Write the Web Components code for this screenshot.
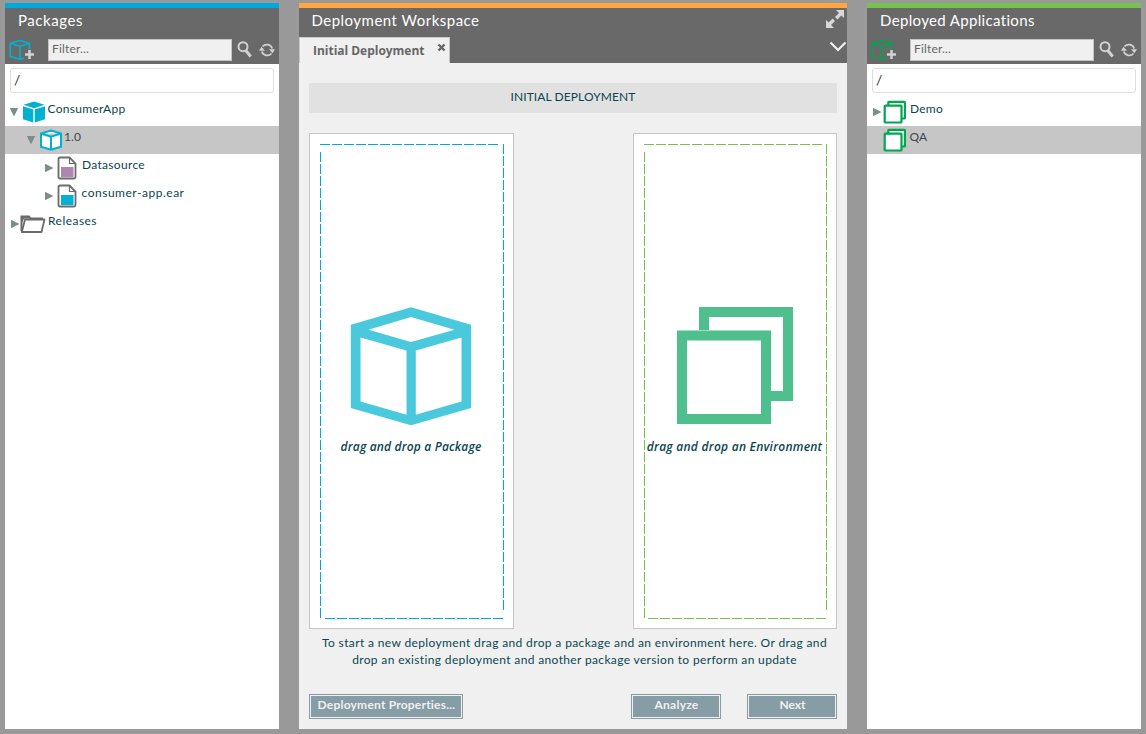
<!DOCTYPE html>
<html lang="en"><head><meta charset="utf-8"><title>Deployment</title>
<style>
html,body{margin:0;height:100%;background:#999}
</style></head><body>
<deploy-app></deploy-app>
<script>
const define=(name,html,setup)=>{
  const t=document.createElement('template');t.innerHTML=html;
  customElements.define(name,class extends HTMLElement{
    connectedCallback(){
      if(this.shadowRoot)return;
      this.attachShadow({mode:'open'}).append(t.content.cloneNode(true));
      if(setup)setup(this,this.shadowRoot);
    }
  });
};

/* Label that spaces its letters to span the width given in "w". */
define('ui-label',`<style>:host{display:inline-block;white-space:pre}span{display:inline-block}</style><span></span>`,(el,r)=>{
  const s=r.querySelector('span'),text=el.getAttribute('text'),w=+el.getAttribute('w');
  s.textContent=text;
  const natural=s.getBoundingClientRect().width;
  if(w&&natural){s.style.letterSpacing=((w-natural)/text.length).toFixed(3)+'px';}
});

const ICONS={
  expand:['0 0 20 20','<path fill="#d8d8d8" d="M11 1h8v8l-2.600-2.600-4 4-2.400-2.400 4-4zM9 19H1v-8l2.600 2.600 4-4 2.400 2.400-4 4z"/><path d="M5.500 5.500l9 9" stroke="#696969" stroke-width="1.400"/>'],
  chevron:['0 0 18 12','<path d="M1.500 1.500L9 9l7.500-7.500" fill="none" stroke="#f0f0f0" stroke-width="2.200"/>'],
  search:['0 0 16 17','<g fill="none" stroke="#d2d2d2"><circle cx="6" cy="5.700" r="4.500" stroke-width="2"/><path d="M8.800 9.500l4.900 6" stroke-width="3"/></g>'],
  refresh:['0 0 16 14','<g fill="none" stroke="#d2d2d2" stroke-width="1.700"><path d="M3.500 3.500A5.700 5.700 0 0 1 13.200 5.500M12.500 10.500A5.700 5.700 0 0 1 2.800 8.500"/></g><path d="M0 7.800L2.500 3.800 6 7.800zM10 6.200h6L13.500 10.200z" fill="#d2d2d2"/>'],
  add:['0 0 26 22','<g fill="none" stroke="currentColor" stroke-width="1.600" stroke-linejoin="round"><path d="M1.200 4.200L11 1.500l9.500 2.700v10M1.200 4.200v13.300L11 20.200l4-1M1.200 4.200L11 7.200l9.500-3M11 7.200v13"/></g><path d="M20.500 10.500v10M15.500 15.500h10" stroke="#696969" stroke-width="5"/><path d="M20.500 11v9M16 15.500h9" stroke="#d2d2d2" stroke-width="2.500"/>'],
  boxfill:['0 0 24 22','<path d="M1.500 3.800L12 .5l10.500 3.300L12 7.200zM1 5.200l10.300 3.200v13L1 18.300zM23 5.200L12.700 8.400v13L23 18.300z" fill="#00b2d0"/>'],
  box:['0 0 24 22','<path d="M2 4.500L12 1.500l10 3v13.200L12 20.700 2 17.700zM2 4.500l10 3.200 10-3.200M12 7.700v13" fill="#fff" stroke="#00b2d0" stroke-width="2"/>'],
  folder:['0 0 26 20','<path d="M1.500 17V2.500h7.500l1.500 2h11.500v2" fill="none" stroke="#6b6b6b" stroke-width="2"/><path d="M1.500 2h7.500l1.500 2.500H4L1.500 10z" fill="#6b6b6b"/><path d="M5 5.500h19.500L21.500 18H1.800z" fill="#fff" stroke="#6b6b6b" stroke-width="1.800" stroke-linejoin="round"/>'],
  envs:['0 0 24 24','<g fill="#fff" stroke="#00a651" stroke-width="2.200"><rect x="5.300" y="1.900" width="16.600" height="16.600" rx=".6"/><rect x="1.700" y="5.700" width="16.800" height="16.800" rx=".6"/></g>'],
  bigbox:['0 0 122 120','<path fill="#4bc9dc" fill-rule="evenodd" d="M.8 17.800L61 .3l60 17.500V101L61 118.300.8 101zM18.500 22.700L61 10 104.500 22.700 61 35zM10.500 30.500v64L56.500 107.700V43.500zM111.500 30.500v64L65.800 107.700V43.500z"/>'],
  bigenv:['0 0 118 118','<g fill="none" stroke="#50bf8e" stroke-width="10"><path d="M27 23V5h84v84H94"/><rect x="5" y="28.500" width="84" height="83.500"/></g>']
};
const doc=c=>['0 0 20 24',`<path d="M3 1.500h9.500l6 6V21q0 1.500-1.500 1.500H3Q1.500 22.500 1.500 21V3Q1.500 1.500 3 1.500z" fill="#fff" stroke="#6b6b6b" stroke-width="1.800"/><path d="M12.500 2v5.500H18" fill="none" stroke="#6b6b6b" stroke-width="1.200"/><path d="M4 11h12.500v10H4z" fill="${c}"/>`];
ICONS.docpurple=doc('#ae87b0');ICONS.doccyan=doc('#00b2d0');
define('ui-icon',`<style>:host{display:block;flex:none}svg{display:block;width:100%;height:100%}</style>`,(el,r)=>{
  const i=ICONS[el.getAttribute('name')];
  r.innerHTML+=`<svg viewBox="${i[0]}">${i[1]}</svg>`;
});

/* Tree rows are built from their attributes. */
define('tree-item',`<style>
:host{display:block;height:28px;font:12px/17px Lato,sans-serif;color:#0b4650}
:host([selected]){background:#c6c6c6;color:#3c4650}
.r{display:flex;height:28px;align-items:flex-start}
.a{width:12px;flex:none;height:12px;padding-top:9px}
svg{display:block}
ui-label{margin-top:2px}
</style><div class="r"></div>`,(el,r)=>{
  const g=n=>el.getAttribute(n);
  const tri={open:'<svg width="10" height="10"><path d="M.8 1h8.400L5 9.500z" fill="#7f8c8d"/></svg>',closed:'<svg width="10" height="10"><path d="M1 .8L9.500 5 1 9.200z" fill="#7f8c8d"/></svg>'}[g('state')]||'';
  const [w,h,mt]=g('size').split(' ');
  r.querySelector('.r').innerHTML=`<div class="a" style="margin-left:${g('indent')}px">${tri}</div><ui-icon name="${g('icon')}" style="width:${w}px;height:${h}px;margin:${mt}px ${g('gap')}px 0 ${g('lead')||0}px"></ui-icon><ui-label text="${g('text')}" w="${g('w')}"></ui-label>`;
});

define('side-panel',`<style>
:host{display:flex;flex-direction:column;width:274px;background:#fff;flex:none;font-family:Lato,sans-serif}
.strip{height:5px;background:var(--accent);flex:none}
header{height:56px;background:#696969;color:#fff;flex:none}
.t{height:28px;padding-left:13px;font-size:15px;line-height:24px}
.bar{display:flex;align-items:flex-start}
.add{width:26px;height:22px;margin:3px 0 0 4px;color:var(--ico)}
.f{box-sizing:border-box;width:184px;height:22px;margin:3px 0 0 13px;border:1px solid #c4c4c4;background:#f0f0f0;color:#666;font-size:12px;line-height:18px;padding-left:3px}
.s{width:16px;height:17px;margin:5px 0 0 5px}
.rf{width:16px;height:14px;margin:7px 0 0 5.500px}
.p{box-sizing:border-box;width:264px;height:25px;border:1px solid #dedede;border-radius:3px;margin:4px 5px 5px;padding-left:3px;font-size:14px;line-height:22px;color:#333;flex:none}
</style><div class="strip"></div><header><div class="t"></div><div class="bar"><ui-icon class="add" name="add"></ui-icon><div class="f"><ui-label text="Filter..." w="37"></ui-label></div><ui-icon class="s" name="search"></ui-icon><ui-icon class="rf" name="refresh"></ui-icon></div></header><div class="p">/</div><slot></slot>`,(el,r)=>{
  r.querySelector('.t').innerHTML=`<ui-label text="${el.getAttribute('heading')}" w="${el.getAttribute('w')}"></ui-label>`;
});

define('drop-card',`<style>
:host{display:grid;box-sizing:border-box;border:1px solid #c6c6c6;background:#fff;height:496px}
.d{grid-area:1/1;margin:10px}
.c{grid-area:1/1;display:flex;flex-direction:column;align-items:center;padding-right:2px;font:italic 600 12px/17px "Open Sans",sans-serif;color:#0b4650;white-space:nowrap}
</style><svg class="d" height="475"></svg><div class="c"><slot></slot></div>`,(el,r)=>{
  const w=+el.getAttribute('inner'),s=r.querySelector('svg');
  s.setAttribute('width',w);
  s.innerHTML=`<g stroke="${el.getAttribute('color')}" stroke-dasharray="10 2"><path d="M0 .5H178M${w-.5} 0V466M${w-1} 474.500H${w-179}M.5 474V8"/></g>`;
});

define('ui-button',`<style>
:host{display:block;box-sizing:border-box;height:25px;border:1px solid #869da5;background:#f0f0f0;padding:1px}
div{box-sizing:border-box;height:21px;background:#869da5;color:#f0f0f0;text-align:center;font:700 12px/18px Lato,sans-serif;padding-left:1px}
</style><div><slot></slot></div>`);

define('work-space',`<style>
:host{display:flex;flex-direction:column;width:548px;background:#f0f0f0;color:#0b4650;font:12px Lato,sans-serif}
.strip{height:5px;background:#ffa63f}
header{height:55px;background:#696969;display:flex;justify-content:space-between;color:#fff}
.t{height:29px;padding-left:12.500px;font-size:15px;line-height:24px}
.tab{box-sizing:border-box;width:151px;height:26px;background:#f0f0f0;border:1px solid #c8c8c8;border-bottom:0;color:#666;font:700 12px/26px "Open Sans",sans-serif;padding-left:13px;display:flex}
.tab svg{margin:5px 0 0 12.500px}
.tools{display:flex;flex-direction:column;align-items:flex-end}
.banner{height:30px;margin:20px 10px;background:#e1e1e1;text-align:center;line-height:28px}
.cards{display:flex;justify-content:space-between;margin:0 10px}
.msg{height:65px;padding:5px 0 0 3px;box-sizing:border-box;text-align:center;line-height:17px}
.btns{display:flex;margin:0 10px}
</style>
<div class="strip"></div>
<header><div><div class="t"><ui-label text="Deployment Workspace" w="168"></ui-label></div><div class="tab"><ui-label text="Initial Deployment" w="111.500"></ui-label><svg width="10" height="10"><path d="M1.500 1.500l6 6M7.500 1.500l-6 6" stroke="#666" stroke-width="2.400"/></svg></div></div>
<div class="tools"><ui-icon name="expand" style="width:20px;height:20px;margin:1px 2px 0 0"></ui-icon><ui-icon name="chevron" style="width:18px;height:12px;margin-top:12px"></ui-icon></div></header>
<div class="banner"><ui-label text="INITIAL DEPLOYMENT" w="125"></ui-label></div>
<div class="cards"><drop-card inner="184" color="#00aadc" style="width:205px"><ui-icon name="bigbox" style="width:122px;height:120px;margin-top:173px"></ui-icon><ui-label text="drag and drop a Package" w="141" style="margin-top:11px"></ui-label></drop-card>
<drop-card inner="183" color="#76c04e" style="width:204px"><ui-icon name="bigenv" style="width:118px;height:118px;margin:173px 0 0 2px"></ui-icon><ui-label text="drag and drop an Environment" w="175.500" style="margin-top:13px"></ui-label></drop-card></div>
<div class="msg"><ui-label text="To start a new deployment drag and drop a package and an environment here. Or drag and" w="505"></ui-label><br><ui-label text="drop an existing deployment and another package version to perform an update" w="445"></ui-label></div>
<div class="btns"><ui-button style="width:154px"><ui-label text="Deployment Properties..." w="138"></ui-label></ui-button><ui-button style="width:90px;margin-left:168px"><ui-label text="Analyze" w="44"></ui-label></ui-button><ui-button style="width:90px;margin-left:26px"><ui-label text="Next" w="26"></ui-label></ui-button></div>`);

define('deploy-app',`<style>
:host{display:flex;gap:20px;box-sizing:border-box;height:734px;width:1146px;padding:3px 5px 5px;background:#999}
</style>
<side-panel heading="Packages" w="65" style="--accent:#00aadf;--ico:#00b2d0">
<tree-item text="ConsumerApp" w="78" state="open" indent="4" icon="boxfill" size="24 22 3" gap="2" lead=".5"></tree-item>
<tree-item text="1.0" w="17" selected state="open" indent="21" icon="box" size="24 22 2.500" gap="1.500" lead=".5"></tree-item>
<tree-item text="Datasource" w="63" state="closed" indent="39" icon="docpurple" size="20 24 2" gap="5" lead="1"></tree-item>
<tree-item text="consumer-app.ear" w="103" state="closed" indent="39" icon="doccyan" size="20 24 2" gap="4.500" lead="1"></tree-item>
<tree-item text="Releases" w="49" state="closed" indent="5" icon="folder" size="26 20 4" gap="2" lead="-2"></tree-item>
</side-panel>
<work-space></work-space>
<side-panel heading="Deployed Applications" w="155" style="--accent:#76c04e;--ico:#00a651">
<tree-item text="Demo" w="33" state="closed" indent="5" icon="envs" size="24 24 2" gap="3" lead="-1"></tree-item>
<tree-item text="QA" w="18" selected indent="4" icon="envs" size="24 24 2" gap="2.500"></tree-item>
</side-panel>`);
</script></body></html>
